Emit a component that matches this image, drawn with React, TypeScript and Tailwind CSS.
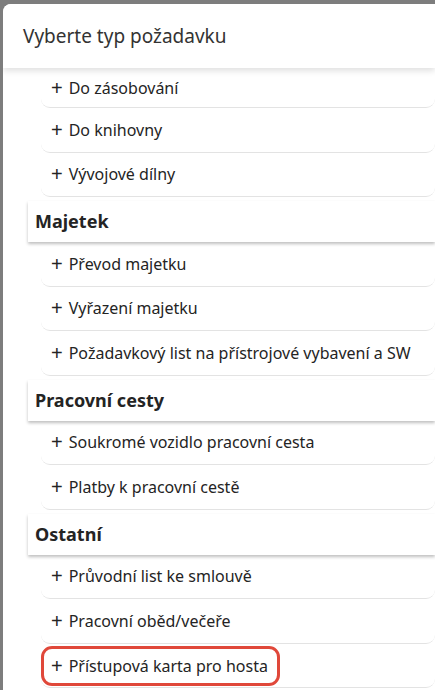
const sections: { title?: string; items: string[] }[] = [
  { items: ["Do zásobování", "Do knihovny", "Vývojové dílny"] },
  { title: "Majetek", items: ["Převod majetku", "Vyřazení majetku", "Požadavkový list na přístrojové vybavení a SW"] },
  { title: "Pracovní cesty", items: ["Soukromé vozidlo pracovní cesta", "Platby k pracovní cestě"] },
  { title: "Ostatní", items: ["Průvodní list ke smlouvě", "Pracovní oběd/večeře", "Přístupová karta pro hosta"] },
];

const Plus = () => (
  <span className="mr-[6px] text-[20px] leading-none" style={{ fontFamily: '"Liberation Sans", sans-serif' }}>
    +
  </span>
);

const Item = ({ label, first, highlight }: { label: string; first?: boolean; highlight?: boolean }) => (
  <div
    className={`ml-[38px] flex items-center rounded-b-[9px] border-b border-[#e3e3e3] ${first ? "h-[40px]" : "h-[44.5px]"}`}
  >
    {highlight ? (
      <span className="mt-[2px] flex h-[40px] items-center rounded-[11px] border-[3px] border-[#e0483a] pr-[9px] pl-[7px]">
        <Plus />
        {label}
      </span>
    ) : (
      <span className="flex items-center pl-[10px]">
        <Plus />
        {label}
      </span>
    )}
  </div>
);

export default function App() {
  return (
    <div
      className="h-[690px] w-[435px] overflow-hidden bg-[#7d7d7d] pt-[4px] pl-[3px]"
      style={{ fontFamily: '"Noto Sans", "Open Sans", sans-serif' }}
    >
      <div className="flex h-full flex-col overflow-hidden rounded-tl-[8px] bg-white">
        <div className="relative z-10 flex h-[64px] shrink-0 items-center bg-white pl-[20px] text-[19px] text-[#333] shadow-[0_3px_6px_rgba(0,0,0,0.12)]">
          Vyberte typ požadavku
        </div>
        <div className="text-[16px] text-[#242424]">
          {sections.map((s, si) => (
            <div key={si}>
              {s.title && (
                <div className="relative mt-[4px] ml-[25px] flex h-[41px] items-center bg-white pl-[7px] text-[18px] font-bold text-[#242424] shadow-[0_2px_3px_rgba(0,0,0,0.25)]">
                  {s.title}
                </div>
              )}
              {s.items.map((it, ii) => (
                <Item
                  key={it}
                  label={it}
                  first={si === 0 && ii === 0}
                  highlight={it === "Přístupová karta pro hosta"}
                />
              ))}
            </div>
          ))}
        </div>
      </div>
    </div>
  );
}
